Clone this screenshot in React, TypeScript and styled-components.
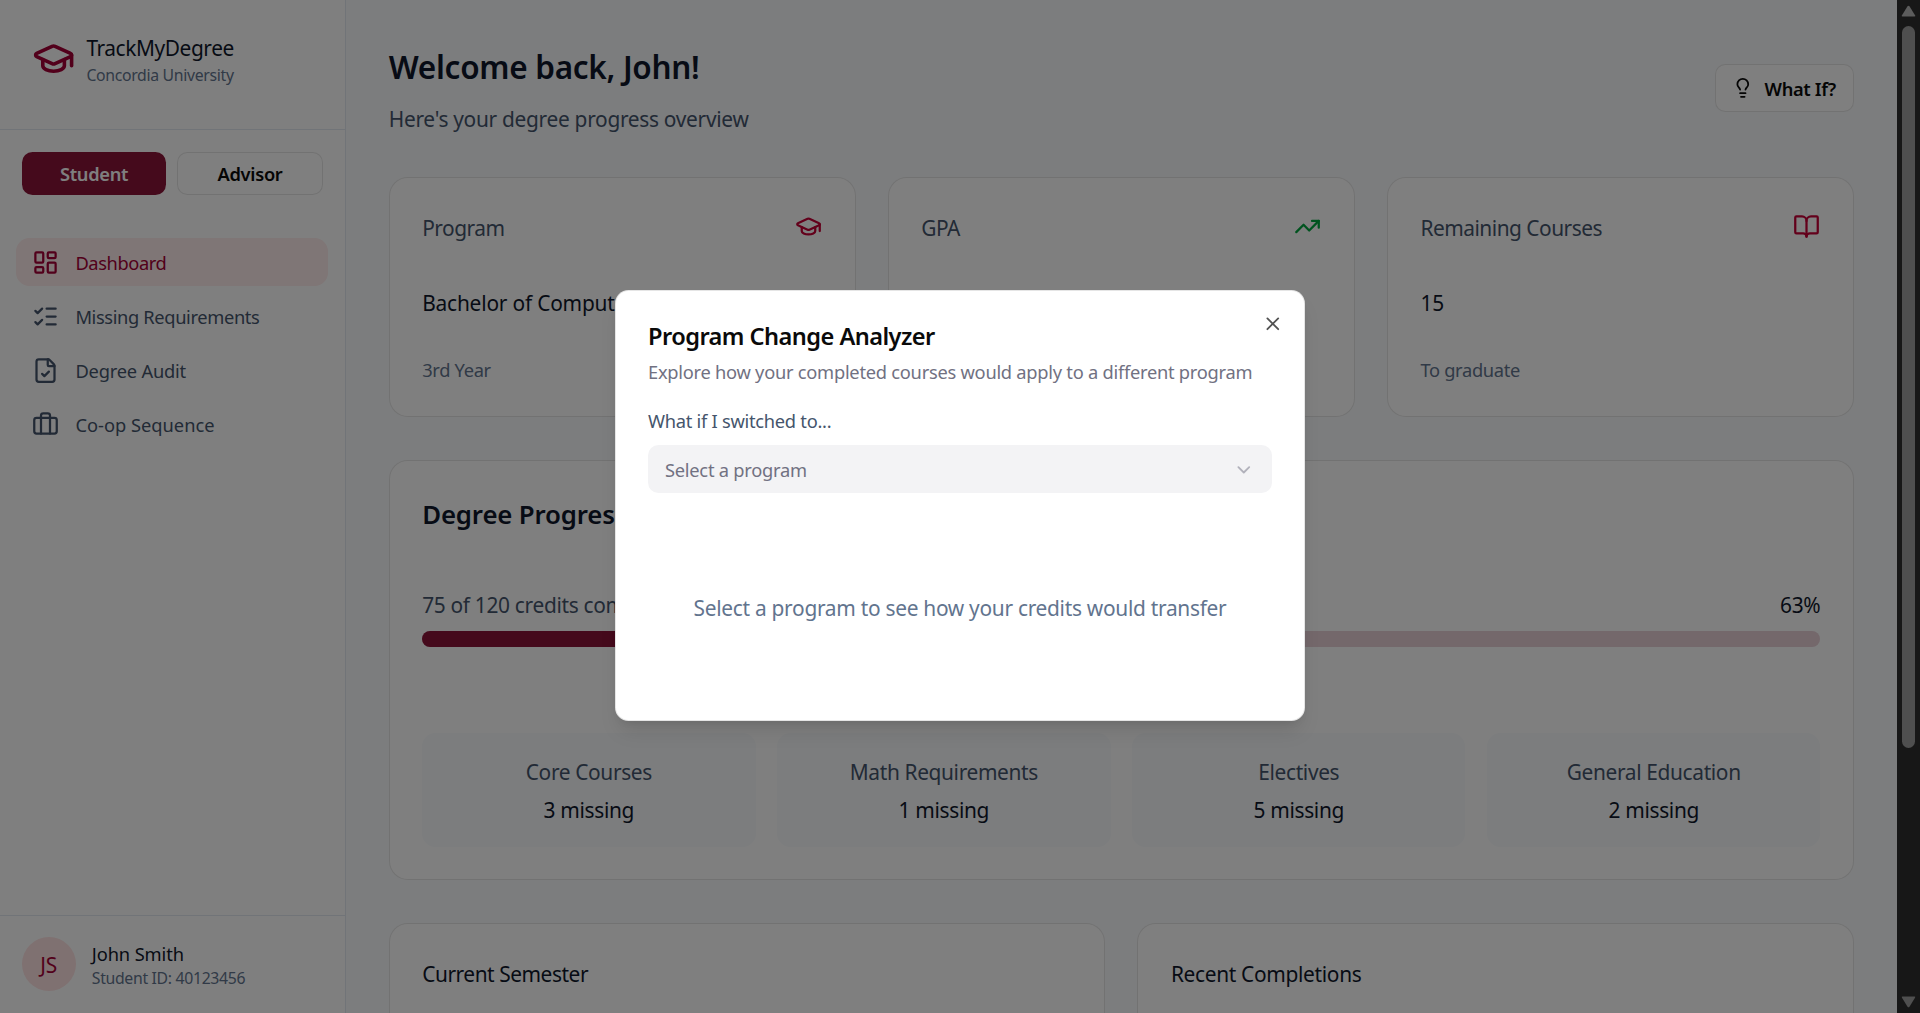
import React from "react";
import styled, { createGlobalStyle } from "styled-components";
import {
  GraduationCap,
  LayoutDashboard,
  ListChecks,
  FileCheck,
  Briefcase,
  TrendingUp,
  BookOpen,
  Lightbulb,
  ChevronDown,
  X,
} from "lucide-react";

const GlobalStyle = createGlobalStyle`
  *, *::before, *::after { box-sizing: border-box; }
  html { font-size: 21.6px; }
  body {
    margin: 0;
    overflow: hidden;
    font-family: "Noto Sans", "Open Sans", sans-serif;
    line-height: 1.5;
    color: #0a0a0a;
  }
  h1, h2, h3, p { margin: 0; font-weight: 400; }
  button { font-family: inherit; }
  svg { display: block; flex-shrink: 0; }
`;

type Tone = "ink" | "body" | "muted";
const tones: Record<Tone, string> = { ink: "#0f172b", body: "#45556c", muted: "#62748e" };

const Screen = styled.div`
  position: relative;
  display: flex;
  width: 100vw;
  height: 100vh;
  overflow: hidden;
  background: #f8fafc;
`;

const Text = styled.span<{ $tone?: Tone; $small?: boolean; $tiny?: boolean; $track?: number }>`
  display: block;
  font-size: ${(p) => (p.$tiny ? 15.8 : p.$small ? 18.3 : 20.9)}px;
  line-height: ${(p) => (p.$tiny ? 1 : p.$small ? 1.25 : 1.5)}rem;
  letter-spacing: ${(p) => p.$track ?? -0.32}px;
  color: ${(p) => tones[p.$tone ?? "ink"]};
  white-space: nowrap;
`;

const Sidebar = styled.aside`
  display: flex;
  flex-direction: column;
  flex: 0 0 345.6px;
  background: #fff;
  border-right: 1px solid #e2e8f0;
`;

const Brand = styled.div`
  display: flex;
  align-items: flex-start;
  gap: 0.5rem;
  height: 130px;
  padding: 1.5rem;
  border-bottom: 1px solid #e2e8f0;
  color: #a50036;
  > svg { margin-top: 5px; }
`;

const RoleSwitch = styled.div`
  display: flex;
  gap: 11.4px;
  height: 108px;
  padding: 22px 1rem 0;
`;

const RoleButton = styled.button<{ $active?: boolean }>`
  flex: ${(p) => (p.$active ? "0 0 144px" : "1")};
  height: 43px;
  padding: ${(p) => (p.$active ? "0 0 0 1px" : "0")};
  border: ${(p) => (p.$active ? "0" : "1px solid rgba(0, 0, 0, 0.1)")};
  border-radius: 10.5px;
  background: ${(p) => (p.$active ? "#8b1538" : "#fff")};
  color: ${(p) => (p.$active ? "#fff" : "#0a0a0a")};
  font-size: 18.3px;
  font-weight: 600;
  letter-spacing: -0.3px;
`;

const Nav = styled.nav`
  display: flex;
  flex-direction: column;
  gap: 6px;
  flex: 1;
  padding: 0 17px 0 16px;
`;

const NavItem = styled.a<{ $active?: boolean }>`
  display: flex;
  align-items: center;
  gap: 0.75rem;
  height: 48px;
  padding: 0 0.75rem;
  border-radius: 13.5px;
  background: ${(p) => (p.$active ? "#ffecec" : "transparent")};
  color: ${(p) => (p.$active ? "#a50036" : "#45556c")};
  > span { color: inherit; padding-top: 1px; }
`;

const Profile = styled.div`
  display: flex;
  align-items: center;
  gap: 0.75rem;
  height: 98.2px;
  padding: 0 1rem 1px;
  border-top: 1px solid #e2e8f0;
`;

const ProfileText = styled.div`
  display: flex;
  flex-direction: column;
  gap: 1px;
  padding-top: 1.5px;
`;

const Avatar = styled.div`
  display: grid;
  place-items: center;
  width: 54px;
  height: 54px;
  border-radius: 50%;
  background: #ffe2e2;
  color: #a50036;
  > span { color: inherit; padding-top: 2px; }
`;

const Stack = styled.div`
  display: flex;
  flex-direction: column;
`;

const Main = styled.main`
  flex: 1;
  min-width: 0;
  display: flex;
  flex-direction: column;
  gap: 43.2px;
  padding: 43.2px 43.2px 0;
  > * { flex-shrink: 0; }
`;

const PageHeader = styled.header`
  display: flex;
  align-items: center;
  justify-content: space-between;
  height: 90.6px;
`;

const Greeting = styled.div`
  display: flex;
  flex-direction: column;
  gap: 11px;
  margin-top: 2px;
`;

const PageTitle = styled.h1`
  font-size: 31.5px;
  line-height: 48.6px;
  font-weight: 600;
  letter-spacing: -0.3px;
  color: #0f172b;
`;

const WhatIf = styled.button`
  display: flex;
  align-items: center;
  gap: 11px;
  width: 138.8px;
  height: 48px;
  margin-bottom: 1px;
  padding: 1px 0 0 16px;
  border: 1px solid rgba(0, 0, 0, 0.1);
  border-radius: 10.5px;
  background: #fff;
  color: #0a0a0a;
  font-size: 18.3px;
  font-weight: 600;
  letter-spacing: -0.35px;
  white-space: nowrap;
  > svg { margin-top: -2px; }
`;

const Grid = styled.div<{ $cols: number; $gap: number }>`
  display: grid;
  grid-template-columns: repeat(${(p) => p.$cols}, minmax(0, 1fr));
  gap: ${(p) => p.$gap}px;
`;

const Card = styled.section<{ $height: number }>`
  display: flex;
  flex-direction: column;
  height: ${(p) => p.$height}px;
  padding: 34px 32.4px 0;
  border: 1px solid rgba(0, 0, 0, 0.1);
  border-radius: 19px;
  background: #fff;
`;

const StatHead = styled.div<{ $color: string }>`
  display: flex;
  align-items: flex-start;
  justify-content: space-between;
  margin-bottom: 43px;
  color: ${(p) => p.$color};
  > svg { margin-top: 1.5px; }
`;

const StatValue = styled.div`
  margin-bottom: 36px;
`;

const SectionTitle = styled.h2`
  margin: -1px 0 55px;
  font-size: 25.8px;
  line-height: 40px;
  font-weight: 600;
  letter-spacing: -0.15px;
  color: #0f172b;
`;

const Row = styled.div`
  display: flex;
  justify-content: space-between;
  margin-bottom: 9.6px;
`;

const Track = styled.div`
  height: 16.2px;
  margin-bottom: 86px;
  border-radius: 8.1px;
  overflow: hidden;
  background: #e8d0d7;
`;

const Fill = styled.div`
  height: 100%;
  background: #8b1538;
`;

const Tile = styled.div`
  display: flex;
  flex-direction: column;
  align-items: center;
  gap: 5.4px;
  height: 113.4px;
  padding-top: 23px;
  border-radius: 13.5px;
  background: #f8fafc;
`;

const ScrollRail = styled.div`
  position: relative;
  z-index: 2;
  display: flex;
  flex-direction: column;
  align-items: center;
  flex: 0 0 23px;
  padding: 5px 0;
  background: #171717;
`;

const Thumb = styled.div`
  width: 13px;
  height: 722px;
  margin: 9px 0 auto;
  border-radius: 7px;
  background: #4f4f4f;
`;

const Overlay = styled.div`
  position: absolute;
  inset: 0;
  z-index: 1;
  background: rgba(0, 0, 0, 0.5);
`;

const DialogLayer = styled.div`
  position: absolute;
  inset: 0;
  z-index: 3;
  display: grid;
  place-items: center;
  padding-bottom: 2px;
`;

const Dialog = styled.div`
  position: relative;
  display: flex;
  flex-direction: column;
  width: 690px;
  height: 430.4px;
  padding: 32px 32px 31px;
  border: 1px solid rgba(0, 0, 0, 0.1);
  border-radius: 13.5px;
  background: #fff;
  box-shadow: 0 13.5px 20px -4px rgba(0, 0, 0, 0.1), 0 5px 8px -5px rgba(0, 0, 0, 0.1);
`;

const DialogTitle = styled.h2`
  font-size: 23.6px;
  line-height: 26px;
  font-weight: 600;
  letter-spacing: -0.55px;
  color: #0a0a0a;
`;

const DialogNote = styled.p`
  margin: 9px 0 22px;
  font-size: 18.3px;
  line-height: 27px;
  letter-spacing: -0.26px;
  color: #717182;
  white-space: nowrap;
`;

const Select = styled.div`
  display: flex;
  align-items: center;
  justify-content: space-between;
  height: 48px;
  margin-top: 11px;
  padding: 0 17px;
  border-radius: 10.5px;
  background: #f3f3f5;
  color: #717182;
  > span { color: inherit; padding-top: 1px; }
  > svg { opacity: 0.5; }
`;

const EmptyState = styled.div`
  flex: 1;
  display: grid;
  place-items: center;
  padding-top: 34.2px;
`;

const Close = styled.div`
  position: absolute;
  top: 21.6px;
  right: 20.6px;
  color: #0a0a0a;
  opacity: 0.7;
`;

const navItems = [
  { label: "Dashboard", Icon: LayoutDashboard, active: true, track: -0.4 },
  { label: "Missing Requirements", Icon: ListChecks, track: -0.36 },
  { label: "Degree Audit", Icon: FileCheck, track: -0.2 },
  { label: "Co-op Sequence", Icon: Briefcase, track: 0 },
];

const stats = [
  { label: "Program", value: "Bachelor of Computer", note: "3rd Year", Icon: GraduationCap, color: "#c70036" },
  { label: "GPA", Icon: TrendingUp, color: "#00a63e" },
  { label: "Remaining Courses", value: "15", note: "To graduate", Icon: BookOpen, color: "#c70036" },
];

const tiles = [
  ["Core Courses", "3 missing"],
  ["Math Requirements", "1 missing"],
  ["Electives", "5 missing"],
  ["General Education", "2 missing"],
];

const Arrow = ({ down }: { down?: boolean }) => (
  <svg width="15" height="12" viewBox="0 0 15 12" fill={down ? "#4f4f4f" : "#5c5c5c"}>
    <path
      d={
        down
          ? "M1.5 .5h12q1.2 0 .5 1.2L8.5 10.8q-1 1-2 0L1 1.7Q.3.5 1.5.5z"
          : "M1.5 11.5h12q1.2 0 .5-1.2L8.5 1.2q-1-1-2 0L1 10.3q-.7 1.2.5 1.2z"
      }
    />
  </svg>
);

export default function App() {
  return (
    <Screen>
      <GlobalStyle />
      <Sidebar>
        <Brand>
          <GraduationCap size={43.2} />
          <Stack>
            <Text $track={-0.42}>TrackMyDegree</Text>
            <Text $tiny $tone="muted">Concordia University</Text>
          </Stack>
        </Brand>
        <RoleSwitch>
          <RoleButton $active>Student</RoleButton>
          <RoleButton>Advisor</RoleButton>
        </RoleSwitch>
        <Nav>
          {navItems.map(({ label, Icon, active, track }) => (
            <NavItem key={label} $active={active}>
              <Icon size={27} />
              <Text $small $track={track}>{label}</Text>
            </NavItem>
          ))}
        </Nav>
        <Profile>
          <Avatar>
            <Text>JS</Text>
          </Avatar>
          <ProfileText>
            <Text $small $track={-0.1}>John Smith</Text>
            <Text $tiny $tone="muted">Student ID: 40123456</Text>
          </ProfileText>
        </Profile>
      </Sidebar>
      <Main>
        <PageHeader>
          <Greeting>
            <PageTitle>Welcome back, John!</PageTitle>
            <Text $tone="body" $track={-0.3}>Here's your degree progress overview</Text>
          </Greeting>
          <WhatIf>
            <Lightbulb size={21.6} />
            What If?
          </WhatIf>
        </PageHeader>
        <Grid $cols={3} $gap={32.4}>
          {stats.map(({ label, value, note, Icon, color }) => (
            <Card key={label} $height={240}>
              <StatHead $color={color}>
                <Text $tone="body" $track={-0.5}>{label}</Text>
                <Icon size={27} />
              </StatHead>
              {value && (
                <StatValue>
                  <Text $track={-0.2}>{value}</Text>
                </StatValue>
              )}
              {note && <Text $small $tone="muted">{note}</Text>}
            </Card>
          ))}
        </Grid>
        <Card $height={420}>
          <SectionTitle>Degree Progress</SectionTitle>
          <Row>
            <Text $tone="body">75 of 120 credits completed</Text>
            <Text>63%</Text>
          </Row>
          <Track>
            <Fill style={{ width: `${(75 / 120) * 100}%` }} />
          </Track>
          <Grid $cols={4} $gap={21.6}>
            {tiles.map(([name, missing]) => (
              <Tile key={name}>
                <Text $tone="body" $track={-0.36}>{name}</Text>
                <Text>{missing}</Text>
              </Tile>
            ))}
          </Grid>
        </Card>
        <Grid $cols={2} $gap={32.4}>
          <Card $height={240}>
            <Text $track={-0.45}>Current Semester</Text>
          </Card>
          <Card $height={240}>
            <Text>Recent Completions</Text>
          </Card>
        </Grid>
      </Main>
      <Overlay />
      <ScrollRail>
        <Arrow />
        <Thumb />
        <Arrow down />
      </ScrollRail>
      <DialogLayer>
        <Dialog role="dialog">
          <DialogTitle>Program Change Analyzer</DialogTitle>
          <DialogNote>Explore how your completed courses would apply to a different program</DialogNote>
          <Text $small $tone="body" $track={-0.27}>What if I switched to...</Text>
          <Select>
            <Text $small $track={-0.25}>Select a program</Text>
            <ChevronDown size={21.6} />
          </Select>
          <EmptyState>
            <Text $tone="muted" $track={-0.29}>Select a program to see how your credits would transfer</Text>
          </EmptyState>
          <Close>
            <X size={21.6} />
          </Close>
        </Dialog>
      </DialogLayer>
    </Screen>
  );
}
